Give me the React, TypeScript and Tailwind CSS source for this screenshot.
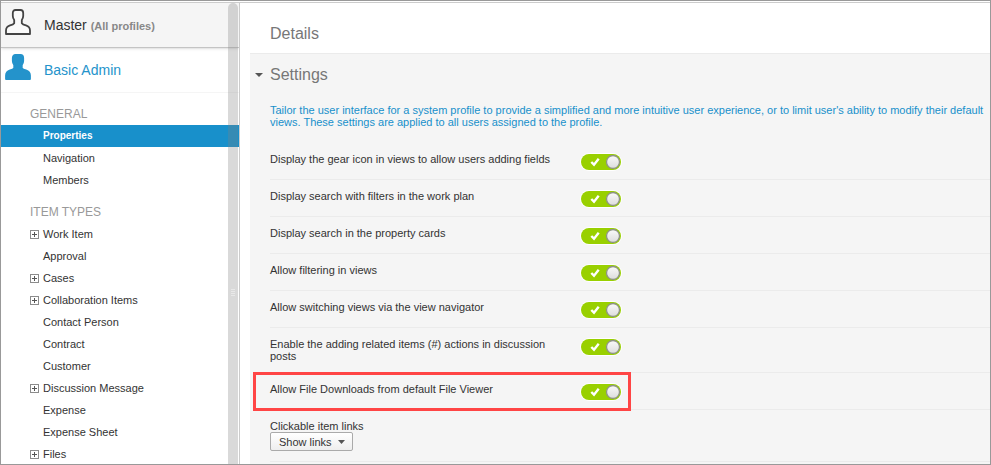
import { useState } from 'react';

interface NavItem {
  label: string;
  expandable?: boolean;
  active?: boolean;
}

interface Setting {
  id: string;
  label: string;
  highlighted?: boolean;
}

const generalItems: NavItem[] = [
  { label: 'Properties', active: true },
  { label: 'Navigation' },
  { label: 'Members' },
];

const itemTypes: NavItem[] = [
  { label: 'Work Item', expandable: true },
  { label: 'Approval' },
  { label: 'Cases', expandable: true },
  { label: 'Collaboration Items', expandable: true },
  { label: 'Contact Person' },
  { label: 'Contract' },
  { label: 'Customer' },
  { label: 'Discussion Message', expandable: true },
  { label: 'Expense' },
  { label: 'Expense Sheet' },
  { label: 'Files', expandable: true },
];

const settings: Setting[] = [
  { id: 'gear', label: 'Display the gear icon in views to allow users adding fields' },
  { id: 'plan-search', label: 'Display search with filters in the work plan' },
  { id: 'card-search', label: 'Display search in the property cards' },
  { id: 'filtering', label: 'Allow filtering in views' },
  { id: 'switching', label: 'Allow switching views via the view navigator' },
  { id: 'related', label: 'Enable the adding related items (#) actions in discussion posts' },
  { id: 'downloads', label: 'Allow File Downloads from default File Viewer', highlighted: true },
];

const PERSON =
  'M10.5 1H15.500C17.300 1 18.200 2.200 18.200 4V7C18.200 8.800 17.600 10 16.800 11V14.200C17.600 15.400 19.200 15.900 21 16.400C24 17.300 25 19 25 21.500V25H1V21.500C1 19 2 17.300 5 16.400C6.800 15.900 8.400 15.400 9.200 14.200V11C8.400 10 7.800 8.800 7.800 7V4C7.800 2.200 8.700 1 10.500 1Z';

function PersonIcon({ filled }: { filled?: boolean }) {
  return (
    <svg width={26} height={26} viewBox="0 0 26 26" className="block shrink-0" aria-hidden="true">
      <path d={PERSON} fill={filled ? '#2493cb' : '#fafafa'} stroke={filled ? '#2493cb' : '#444'} strokeWidth={1.8} strokeLinejoin="round" />
    </svg>
  );
}

function NavList({ title, items }: { title: string; items: NavItem[] }) {
  return (
    <section>
      <h2 className="pl-[29px] text-[12px] leading-[22px] text-[#999]">{title}</h2>
      <ul>
        {items.map(item => (
          <li
            key={item.label}
            className={item.active ? 'flex h-[22px] items-center bg-[#1890cb] pl-[29px] text-[10px] font-bold text-white' : 'flex h-[22px] items-center pl-[29px]'}
          >
            <span className="w-[13px]">
              {item.expandable && (
                <button type="button" aria-label={`Expand ${item.label}`} className="block">
                  <svg width={9} height={9} viewBox="0 0 9 9" className="block" shapeRendering="crispEdges">
                    <rect x={0.5} y={0.5} width={8} height={8} fill="#fff" stroke="#8c8c8c" />
                    <path d="M2 4.500H7M4.500 2V7" stroke="#555" />
                  </svg>
                </button>
              )}
            </span>
            <a href="#">{item.label}</a>
          </li>
        ))}
      </ul>
    </section>
  );
}

function Toggle({ id }: { id: string }) {
  const [on, setOn] = useState(true);
  return (
    <span className="grid h-4 w-10 shrink-0">
      <input
        id={id}
        type="checkbox"
        checked={on}
        onChange={e => setOn(e.target.checked)}
        className="col-start-1 row-start-1 h-4 w-10 appearance-none rounded-full bg-[#bbb] ring-1 ring-white checked:bg-[#99d000]"
      />
      <svg width={40} height={16} viewBox="0 0 40 16" className="pointer-events-none col-start-1 row-start-1 block" aria-hidden="true">
        <defs>
          <linearGradient id={`${id}-knob`} x1="0" y1="0" x2="0" y2="1">
            <stop offset="0" stopColor="#fafafa" />
            <stop offset="1" stopColor="#dcdcdc" />
          </linearGradient>
        </defs>
        {on && <path d="M10.300 8L13 10.700L17.700 4.800" fill="none" stroke="#fff" strokeWidth={2.4} />}
        <circle cx={on ? 32 : 8} cy={8} r={6.5} fill={`url(#${id}-knob)`} stroke="#8f9485" strokeWidth={1.3} />
      </svg>
    </span>
  );
}

function SettingRow({ setting }: { setting: Setting }) {
  return (
    <div className="relative flex min-h-[37px] items-start border-b border-[#ebebeb]">
      <div className="w-[311px] shrink-0 py-[10px] pr-4">
        <label htmlFor={setting.id} className="block">{setting.label}</label>
      </div>
      <div className="pt-[11px]">
        <Toggle id={setting.id} />
      </div>
      {setting.highlighted && (
        <div className="pointer-events-none absolute -top-px -bottom-[2px] -left-[17px] w-[378px] border-3 border-[#ff4545]" />
      )}
    </div>
  );
}

export default function App() {
  return (
    <div className="flex h-screen flex-col overflow-hidden border border-[#999] bg-white pt-px font-['Liberation_Sans',Arial,sans-serif] text-[11px] leading-[12px] text-[#333]">
      <div className="flex min-h-0 flex-1 border-t border-[#ccc]">
        <aside className="relative w-[239px] shrink-0 overflow-hidden border-r border-[#ccc]">
          <div className="flex h-[45px] items-start gap-[13px] border-b border-[#c4c4c4] bg-[#f5f5f5] pt-[6px] pl-1 shadow-sm">
            <PersonIcon />
            <a href="#" className="pt-[6px] text-[14px] leading-5">
              Master <span className="text-[11px] font-bold text-[#888]">(All profiles)</span>
            </a>
          </div>
          <div className="flex h-[45px] items-start gap-[13px] border-b border-[#f5f5f5] pt-[6px] pl-1">
            <PersonIcon filled />
            <a href="#" className="pt-[6px] text-[14px] leading-5 text-[#2493cb]">Basic Admin</a>
          </div>
          <nav className="flex flex-col gap-[10px] pt-[10px]">
            <NavList title="GENERAL" items={generalItems} />
            <NavList title="ITEM TYPES" items={itemTypes} />
          </nav>
          {/* overlay scrollbar with its drag grip */}
          <div className="absolute inset-y-0 right-px flex w-[10px] flex-col items-center justify-center gap-px rounded-t-full bg-[#808080]/30 pt-[117px]">
            <span className="h-px w-1 bg-white/40" />
            <span className="h-px w-1 bg-white/40" />
            <span className="h-px w-1 bg-white/40" />
            <span className="h-px w-1 bg-white/40" />
          </div>
        </aside>

        <main className="min-w-0 flex-1 overflow-hidden pl-[10px]">
          <h1 className="h-[51px] border-b border-[#ebebeb] pt-[21px] pl-5 text-[16px] leading-5 text-[#777]">Details</h1>
          <section className="min-h-full bg-[#f5f5f5] pt-[11px] pl-5">
            <h2 className="-ml-[15px] text-[16px] leading-5 text-[#777]">
              <button type="button" className="flex items-center gap-[7px]">
                <svg width={8} height={4} viewBox="0 0 8 4" aria-hidden="true">
                  <path d="M0 0H8L4 4Z" fill="#555" />
                </svg>
                Settings
              </button>
            </h2>
            <p className="pt-[19px] pb-[15px] text-[#1890cb]">
              Tailor the user interface for a system profile to provide a simplified and more intuitive user experience, or to limit
              user's ability to modify their default views. These settings are applied to all users assigned to the profile.
            </p>
            {settings.map(s => (
              <SettingRow key={s.id} setting={s} />
            ))}
            <div className="flex h-[52px] flex-col items-start border-b border-[#ebebeb] pt-[10px]">
              <label htmlFor="links">Clickable item links</label>
              <div className="grid items-center">
                <select
                  id="links"
                  className="col-start-1 row-start-1 h-[19px] w-[83px] appearance-none rounded-xs border border-[#aaa] bg-linear-to-b from-white to-[#eee] pl-2 text-[11px] leading-[12px]"
                >
                  <option>Show links</option>
                  <option>Hide links</option>
                </select>
                <svg width={7} height={4} viewBox="0 0 7 4" className="pointer-events-none col-start-1 row-start-1 mr-2 justify-self-end" aria-hidden="true">
                  <path d="M0 0H7L3.500 4Z" fill="#555" />
                </svg>
              </div>
            </div>
          </section>
        </main>
      </div>
    </div>
  );
}
